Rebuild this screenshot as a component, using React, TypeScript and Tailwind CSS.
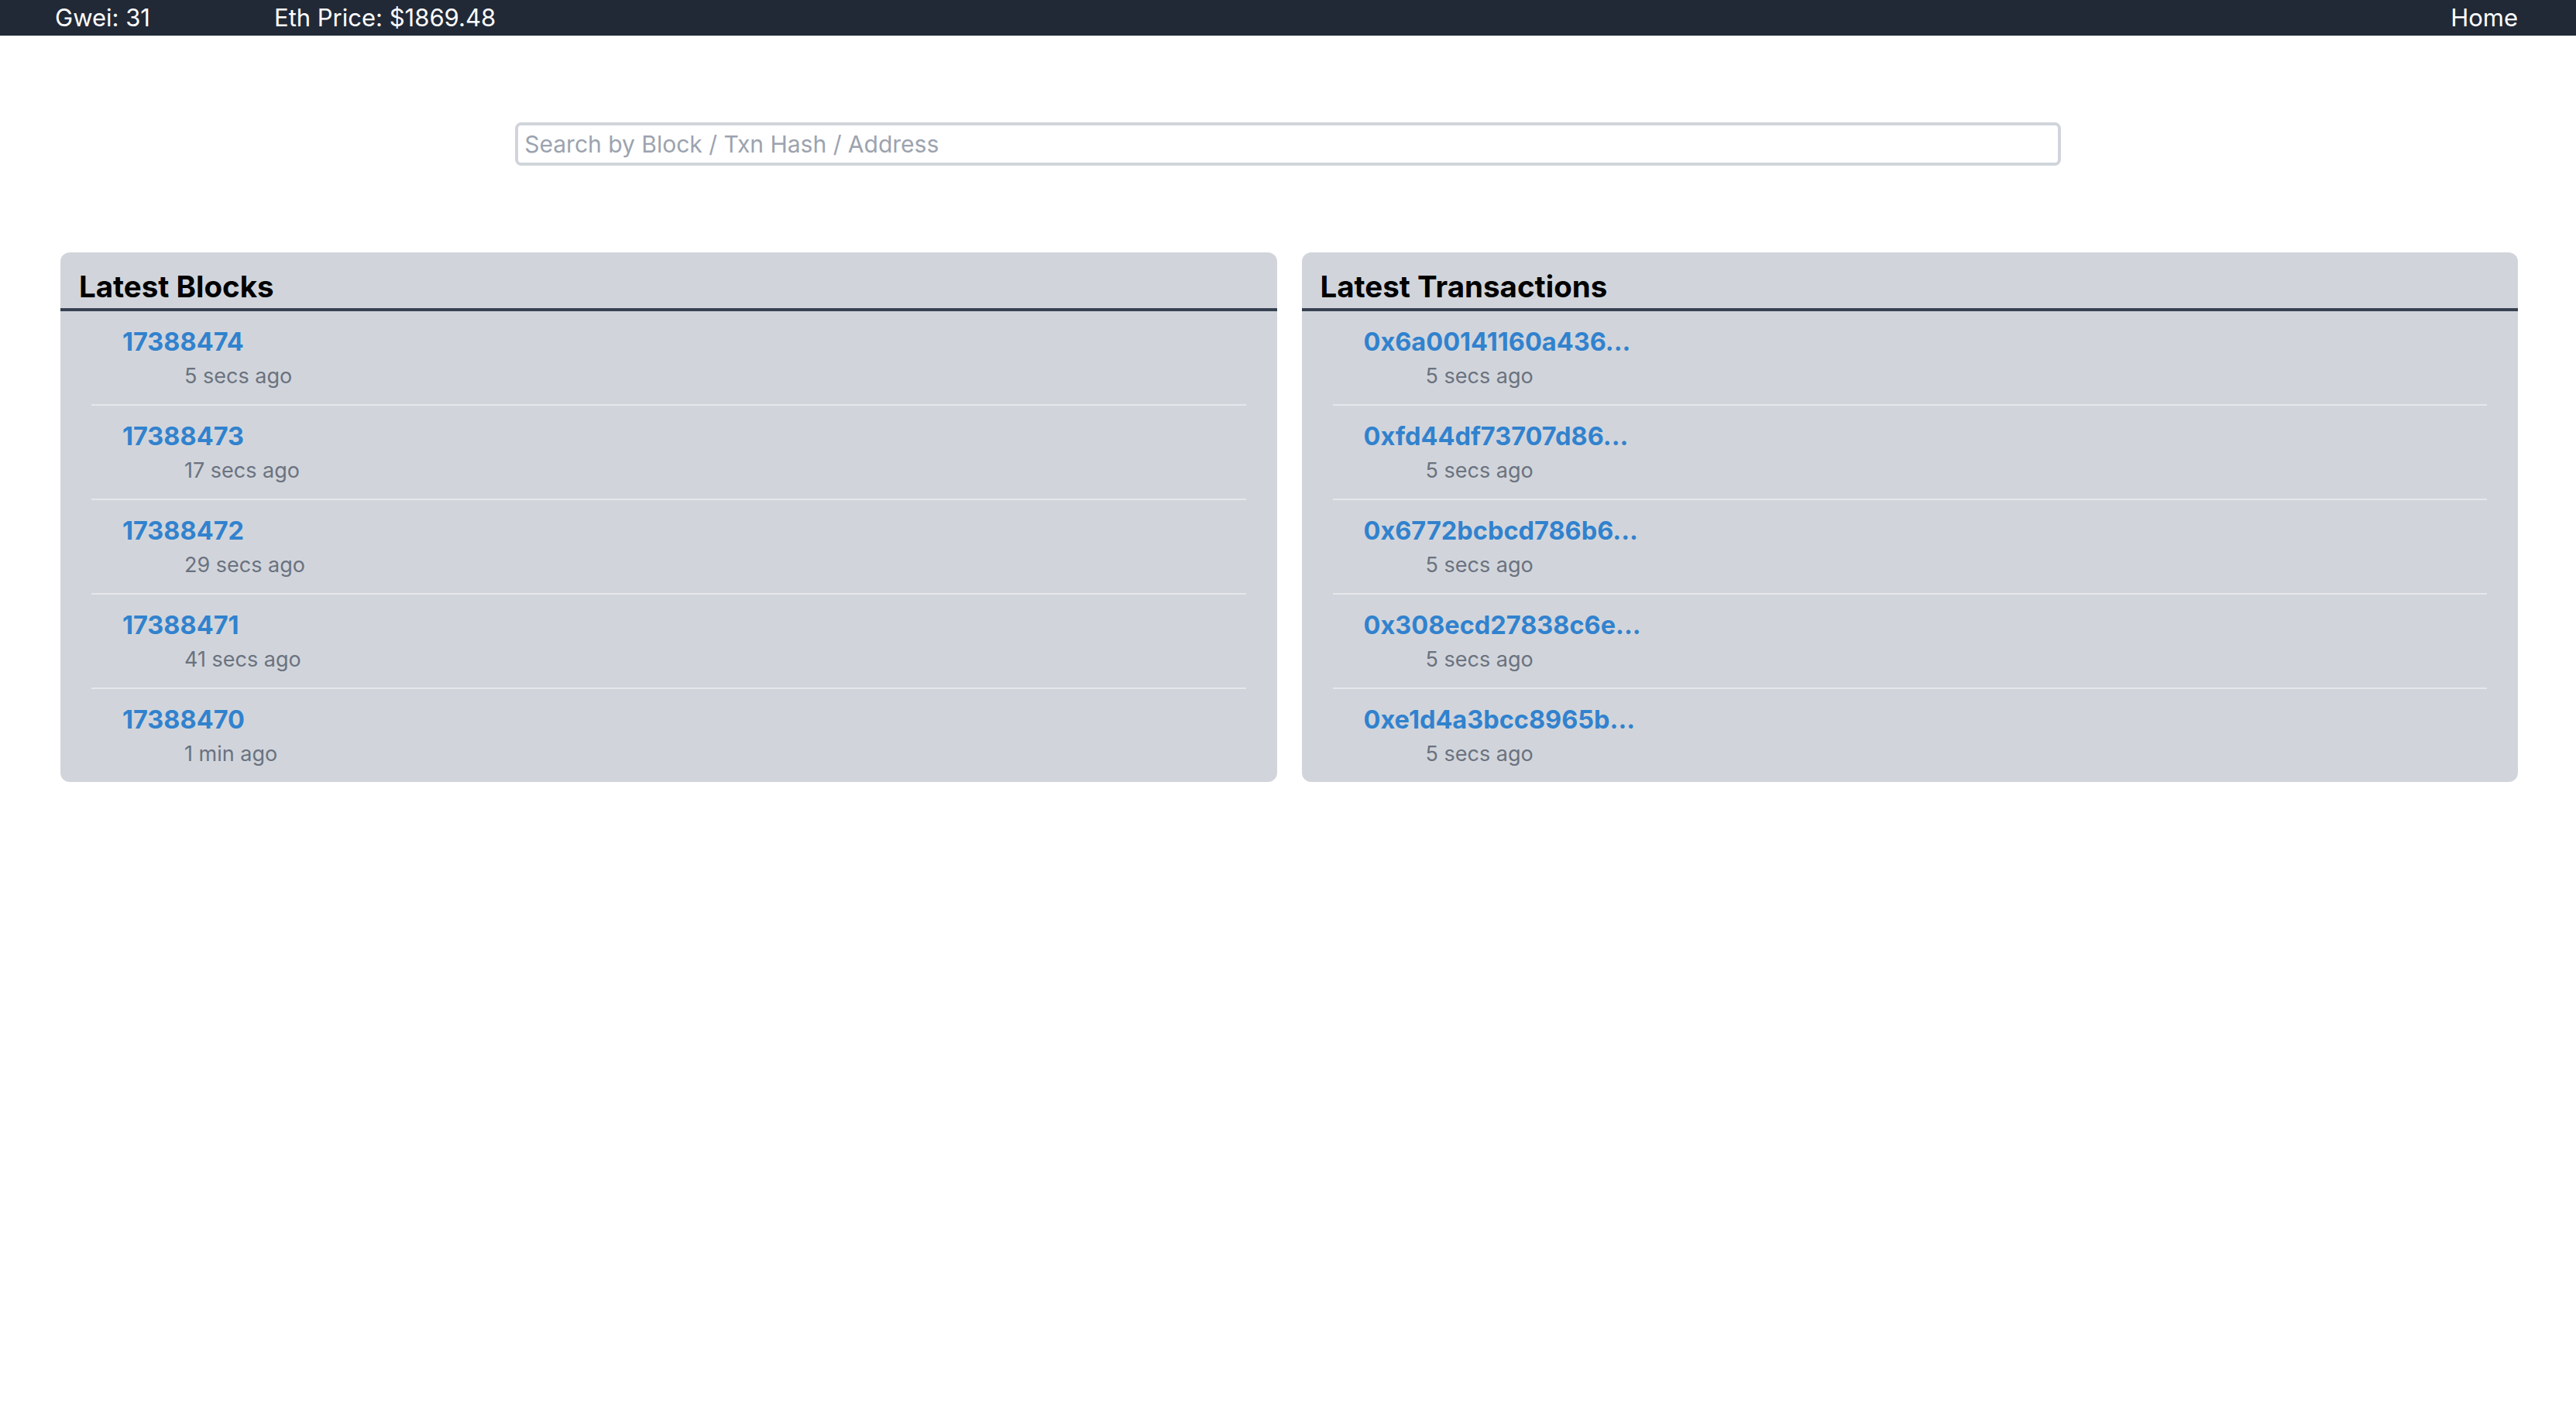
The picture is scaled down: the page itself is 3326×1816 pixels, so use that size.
import React from "react";

const BLOCKS = [
  { id: "17388474", age: "5 secs ago" },
  { id: "17388473", age: "17 secs ago" },
  { id: "17388472", age: "29 secs ago" },
  { id: "17388471", age: "41 secs ago" },
  { id: "17388470", age: "1 min ago" },
];

const TXNS = [
  { id: "0x6a00141160a436...", age: "5 secs ago" },
  { id: "0xfd44df73707d86...", age: "5 secs ago" },
  { id: "0x6772bcbcd786b6...", age: "5 secs ago" },
  { id: "0x308ecd27838c6e...", age: "5 secs ago" },
  { id: "0xe1d4a3bcc8965b...", age: "5 secs ago" },
];

type Item = { id: string; age: string };

function Panel({ title, items }: { title: string; items: Item[] }) {
  return (
    <div className="overflow-hidden rounded-[12px] bg-[#d1d5db]">
      <h2 className="border-b-[4px] border-[#374151] px-[24px] pt-[16px] text-[38.5px] font-bold leading-[56px] text-black">
        {title}
      </h2>
      <ul className="mx-[40px] divide-y-[2px] divide-[#e5e7eb]">
        {items.map((it) => (
          <li key={it.id} className="px-[40px] py-[16px]">
            <a href="#" className="block text-[32.5px] font-bold leading-[48px] text-[#3182ce]">
              {it.id}
            </a>
            <div className="pl-[80px] text-[27px] leading-[40px] text-[#6b7280]">{it.age}</div>
          </li>
        ))}
      </ul>
    </div>
  );
}

export default function App() {
  return (
    <div className="min-h-screen bg-white font-['Inter','Noto_Sans',sans-serif]">
      {/* Top bar: gas + price, nav link */}
      <nav className="flex h-[46px] items-center bg-[#212937] pl-[71px] pr-[75px] text-[31px] leading-[46px] text-white">
        <span className="w-[283px]">Gwei: 31</span>
        <span>Eth Price: $1869.48</span>
        <a href="#" className="ml-auto">
          Home
        </a>
      </nav>

      <div className="mx-auto mt-[112px] w-3/5">
        <input
          type="text"
          placeholder="Search by Block / Txn Hash / Address"
          className="block w-full rounded-[8px] border-[4px] border-[#d1d5db] px-[8px] text-[30px] leading-[48px] text-gray-800 outline-none placeholder:text-[#9ca3af]"
        />
      </div>

      <div className="mt-[112px] grid grid-cols-2 gap-[32px] pl-[78px] pr-[75px]">
        <Panel title="Latest Blocks" items={BLOCKS} />
        <Panel title="Latest Transactions" items={TXNS} />
      </div>
    </div>
  );
}
